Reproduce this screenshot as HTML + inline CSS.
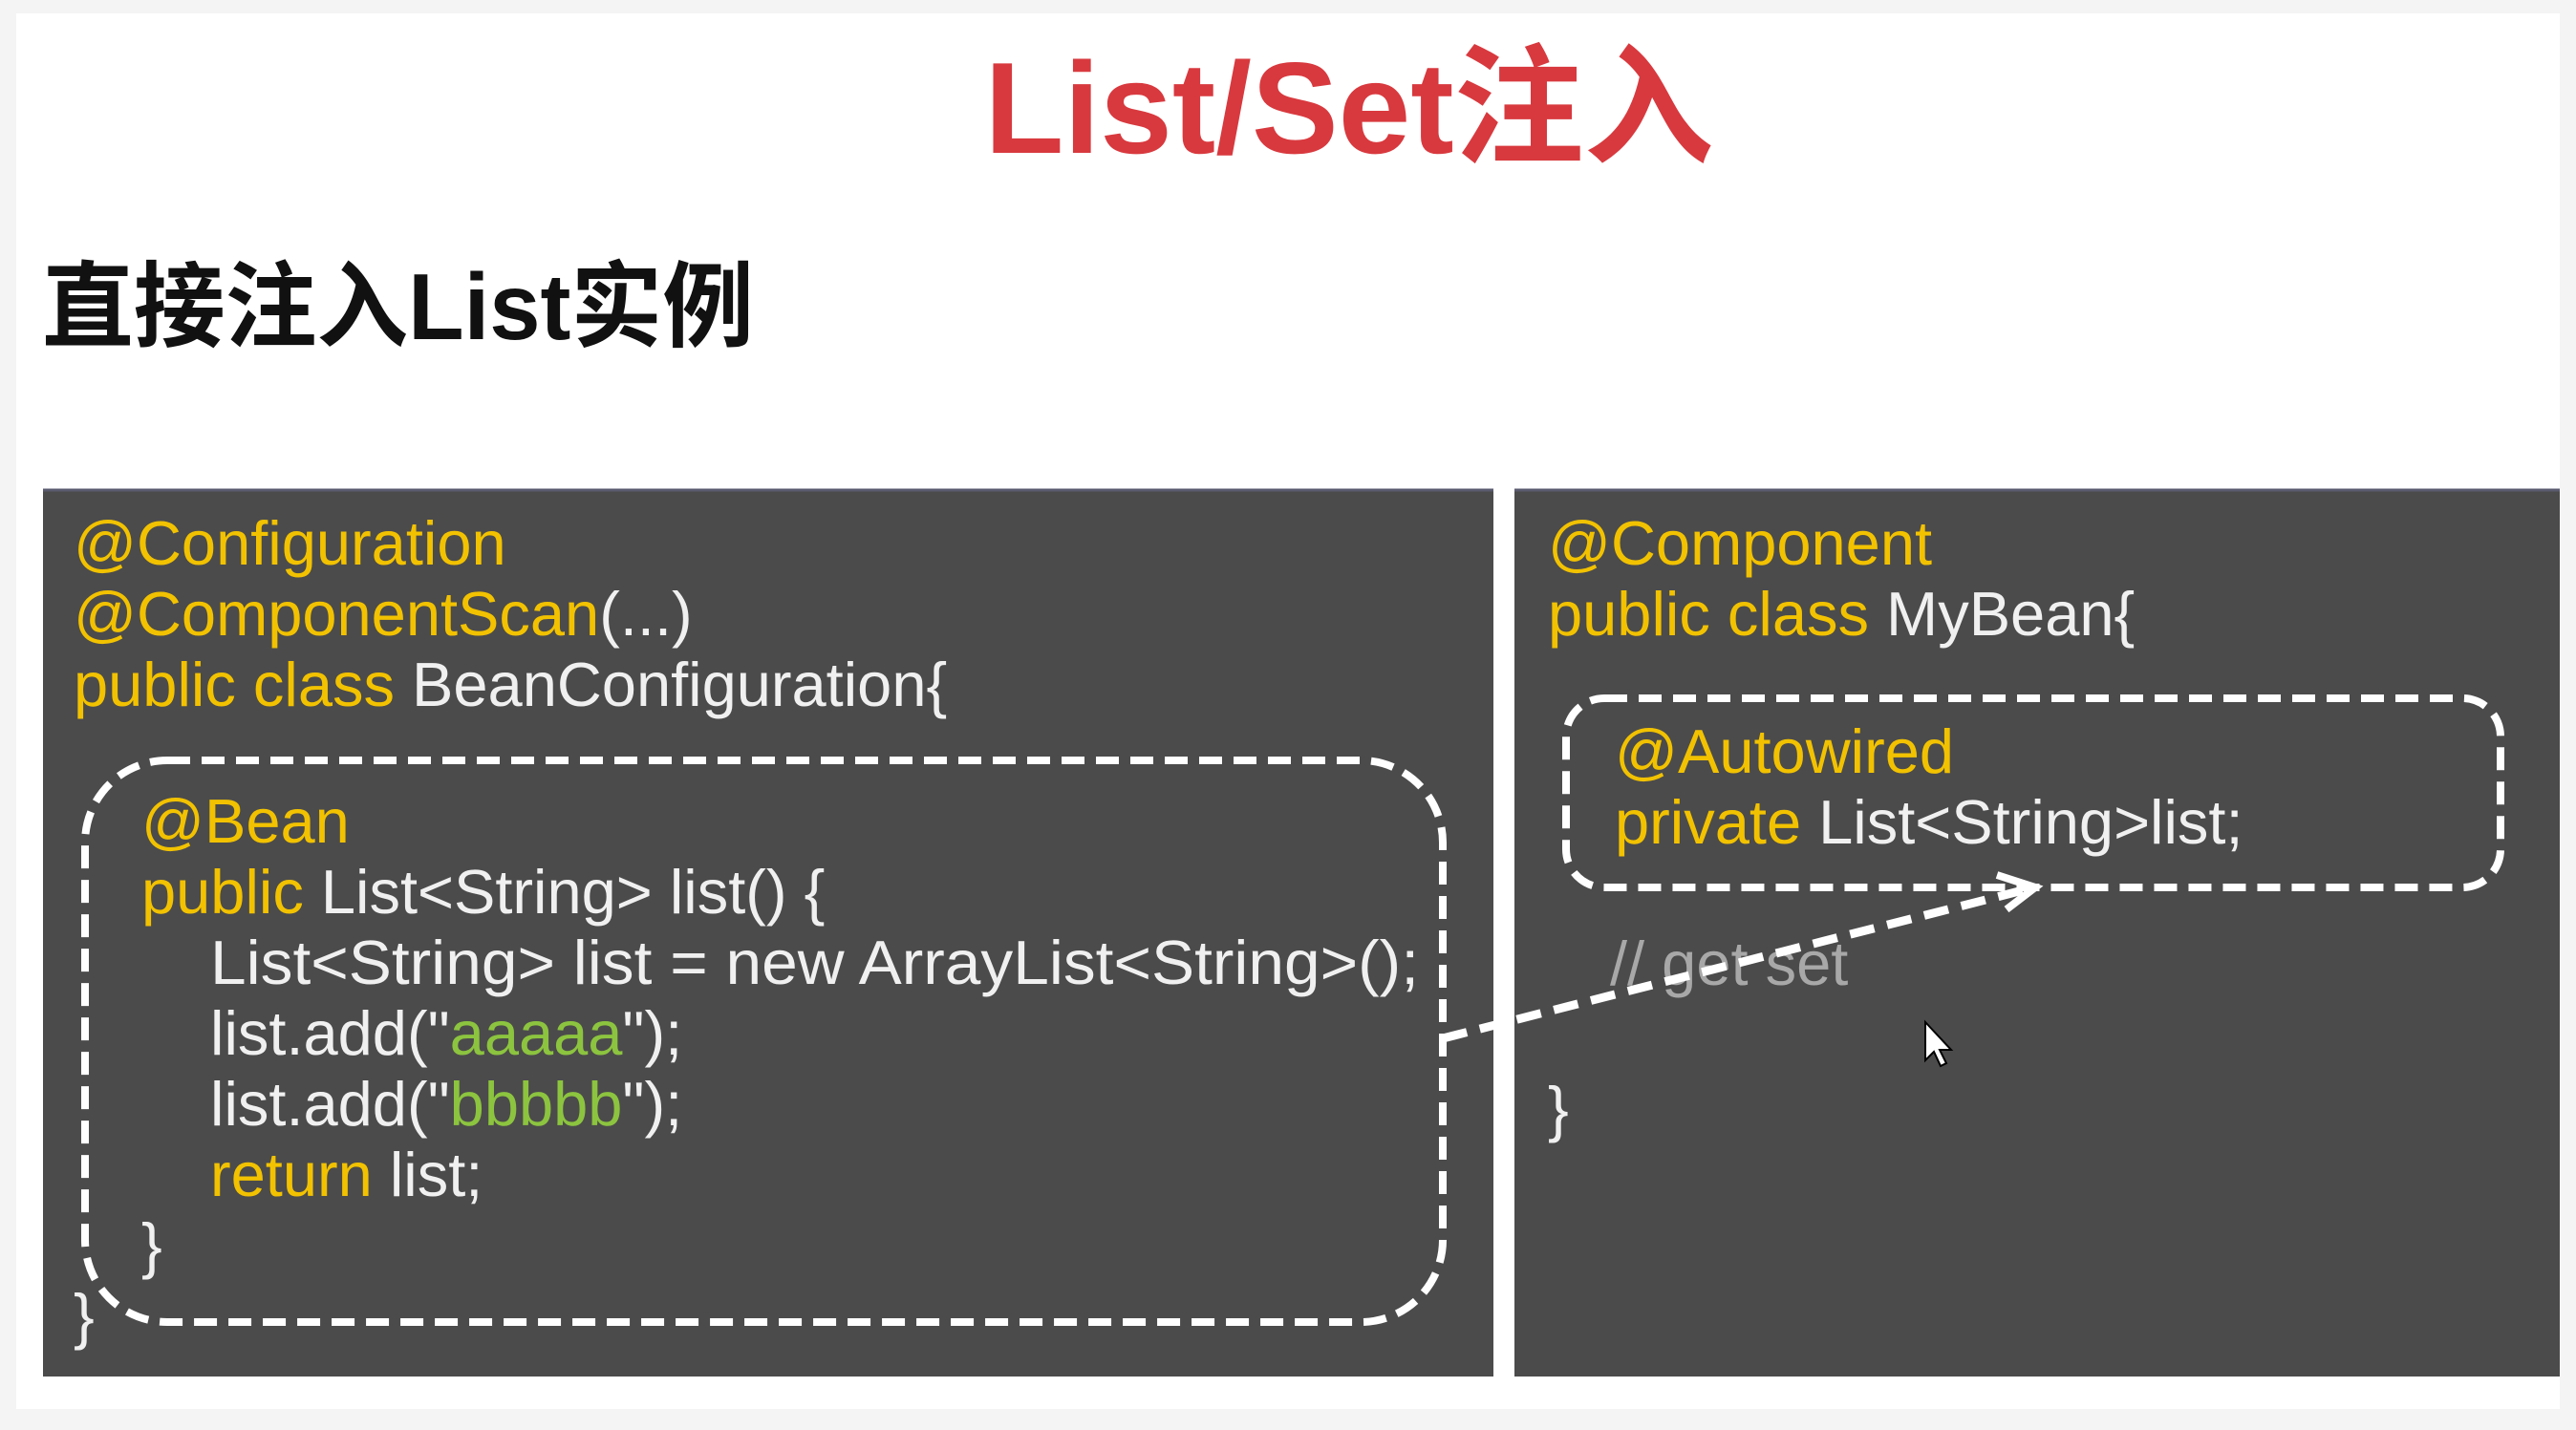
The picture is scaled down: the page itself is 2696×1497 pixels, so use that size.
<!DOCTYPE html>
<html><head><meta charset="utf-8"><style>
html,body{margin:0;padding:0;background:#f4f4f4;}
body{width:2696px;height:1492px;overflow:hidden;}
svg text{font-family:"Liberation Sans","Noto Sans CJK SC",sans-serif;}
</style></head><body>
<svg width="2696" height="1492" viewBox="0 0 2696 1492" xmlns="http://www.w3.org/2000/svg">
<rect x="0" y="0" width="2696" height="1492" fill="#f4f4f4"/>
<rect x="17" y="14" width="2662" height="1461" fill="#ffffff"/>
<text x="1412" y="160" text-anchor="middle" font-size="136" font-weight="bold" fill="#d8393e">List/Set注入</text>
<text x="44" y="355" font-size="98" font-weight="bold" fill="#111" textLength="745" lengthAdjust="spacingAndGlyphs">直接注入List实例</text>
<rect x="45" y="512" width="1518" height="929" fill="#4b4b4b"/>
<rect x="1585" y="512" width="1094" height="929" fill="#4b4b4b"/>
<line x1="45" y1="513" x2="1563" y2="513" stroke="#5b5b70" stroke-width="3"/>
<line x1="1585" y1="513" x2="2679" y2="513" stroke="#5b5b70" stroke-width="3"/>
<g font-size="65">
<text x="77" y="591" fill="#f2c200">@Configuration</text>
<text x="77" y="665" fill="#f2c200">@ComponentScan<tspan fill="#f0f0f0">(...)</tspan></text>
<text x="77" y="739" fill="#f2c200">public class <tspan fill="#f0f0f0">BeanConfiguration{</tspan></text>
<text x="148" y="882" fill="#f2c200">@Bean</text>
<text x="148" y="956" fill="#f2c200">public <tspan fill="#f0f0f0">List&lt;String&gt; list() {</tspan></text>
<text x="220" y="1030" fill="#f0f0f0" textLength="1265" lengthAdjust="spacingAndGlyphs">List&lt;String&gt; list = new ArrayList&lt;String&gt;();</text>
<text x="220" y="1104" fill="#f0f0f0">list.add("<tspan fill="#8cc43f">aaaaa</tspan>");</text>
<text x="220" y="1178" fill="#f0f0f0">list.add("<tspan fill="#8cc43f">bbbbb</tspan>");</text>
<text x="220" y="1252" fill="#f2c200">return <tspan fill="#f0f0f0">list;</tspan></text>
<text x="148" y="1326" fill="#f0f0f0">}</text>
<text x="77" y="1400" fill="#f0f0f0">}</text>
<text x="1620" y="591" fill="#f2c200">@Component</text>
<text x="1620" y="665" fill="#f2c200">public class <tspan fill="#f0f0f0">MyBean{</tspan></text>
<text x="1690" y="809" fill="#f2c200">@Autowired</text>
<text x="1690" y="883" fill="#f2c200">private <tspan fill="#f0f0f0">List&lt;String&gt;list;</tspan></text>
<text x="1685" y="1031" fill="#a8a8a8">// get set</text>
<text x="1620" y="1183" fill="#f0f0f0">}</text>
</g>
<rect x="89" y="796" width="1421" height="588" rx="86" ry="86" fill="none" stroke="#fff" stroke-width="8" stroke-dasharray="24,12"/>
<rect x="1639" y="731" width="978" height="198" rx="40" ry="40" fill="none" stroke="#fff" stroke-width="8" stroke-dasharray="24,12"/>
<line x1="1510" y1="1087" x2="2125" y2="930" stroke="#fff" stroke-width="9" stroke-dasharray="26,14"/>
<path d="M2090 916 L2130 929 L2100 952" fill="none" stroke="#fff" stroke-width="8"/>
<path d="M2015 1070 L2015 1110 L2024 1101 L2031 1116 L2037 1113 L2030 1099 L2042 1099 Z" fill="#fff" stroke="#000" stroke-width="2"/>
</svg>
</body></html>
